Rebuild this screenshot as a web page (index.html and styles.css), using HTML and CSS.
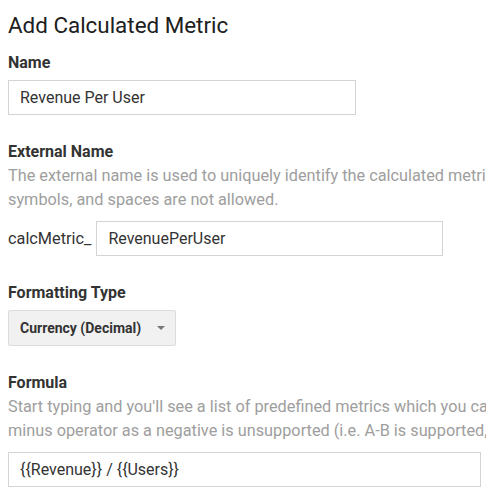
FILE: index.html
```html
<!DOCTYPE html>
<html lang="en">
<head>
    <meta charset="UTF-8">
    <meta name="viewport" content="width=device-width, initial-scale=1.0">
    <title>Add Calculated Metric</title>
    <link rel="stylesheet" href="styles.css">
</head>
<body>
    <div class="page">
        <h1>Add Calculated Metric</h1>

        <div class="field">
            <label class="label" for="name">Name</label>
            <input class="text-input name-input" type="text" id="name" value="Revenue Per User">
        </div>

        <div class="field">
            <label class="label" for="external">External Name</label>
            <p class="hint">The external name is used to uniquely identify the calculated metric in the API. Special characters,<br>symbols, and spaces are not allowed.</p>
            <div class="prefix-row">
                <span class="prefix">calcMetric_</span>
                <input class="text-input external-input" type="text" id="external" value="RevenuePerUser">
            </div>
        </div>

        <div class="field">
            <label class="label">Formatting Type</label>
            <div class="select">
                <span>Currency (Decimal)</span>
                <span class="caret"></span>
            </div>
        </div>

        <div class="field">
            <label class="label" for="formula">Formula</label>
            <p class="hint">Start typing and you'll see a list of predefined metrics which you can choose from. Note: using the<br>minus operator as a negative is unsupported (i.e. A-B is supported, but -A is not).</p>
            <input class="text-input formula-input" type="text" id="formula" value="{{Revenue}} / {{Users}}">
        </div>
    </div>
</body>
</html>
```

FILE: styles.css
```css
html, body {
    overflow: hidden;
}

body {
    margin: 0;
    font-family: 'Roboto', 'Liberation Sans', sans-serif;
    color: #222;
    background-color: #fff;
}

.page {
    padding: 10px 8px 0 8px;
}

h1 {
    font-size: 22.4px;
    font-weight: 400;
    color: #202020;
    margin: 0 0 13px 0;
    line-height: 30px;
}

.field {
    margin-bottom: 27px;
}

.label {
    display: block;
    font-size: 16px;
    font-weight: 700;
    color: #333;
    line-height: 20px;
    margin-bottom: 7px;
}

/* helper text is wider than the dialog and gets clipped on the right */
.hint {
    margin: -5px 0 9px 0;
    font-size: 16.3px;
    line-height: 24px;
    color: #9e9e9e;
    white-space: nowrap;
}

.text-input {
    box-sizing: border-box;
    height: 35px;
    border: 1px solid #d4d4d4;
    padding: 0 11px;
    font-family: inherit;
    font-size: 16px;
    color: #333;
    background-color: #fff;
    outline: none;
}

.name-input {
    width: 348px;
}

.prefix-row {
    display: flex;
    align-items: center;
    gap: 5px;
}

.prefix {
    font-size: 16.3px;
    color: #333;
}

.external-input {
    width: 347px;
}

.formula-input {
    width: 473px;
}

.select {
    box-sizing: border-box;
    display: flex;
    align-items: center;
    justify-content: space-between;
    width: 168px;
    height: 36px;
    padding: 0 10px 0 11px;
    border: 1px solid #dcdcdc;
    border-radius: 2px;
    background-color: #f1f1f1;
    font-size: 14px;
    font-weight: 700;
    color: #333;
}

.caret {
    width: 0;
    height: 0;
    border-left: 4px solid transparent;
    border-right: 4px solid transparent;
    border-top: 4px solid #777;
}
```
